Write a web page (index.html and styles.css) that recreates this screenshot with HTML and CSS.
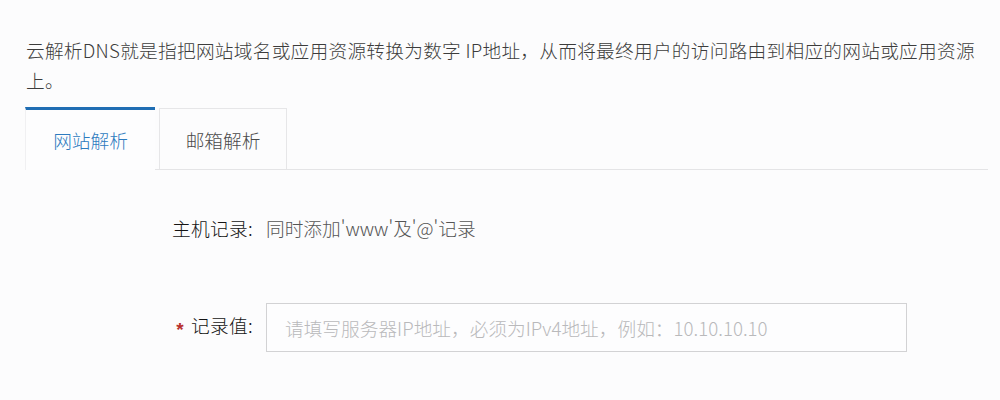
FILE: index.html
```html
<!DOCTYPE html>
<html lang="zh-CN">
<head>
<meta charset="utf-8">
<title>云解析DNS</title>
<link rel="stylesheet" href="styles.css">
</head>
<body>
<div class="page">
  <p class="intro">云解析DNS就是指把网站域名或应用资源转换为数字 IP地址，从而将最终用户的访问路由到相应的网站或应用资源上。</p>
  <div class="tabs">
    <div class="tab active">网站解析</div>
    <div class="tab">邮箱解析</div>
  </div>
  <div class="form">
    <div class="label">主机记录:</div>
    <div class="value">同时添加'www'及'@'记录</div>
    <div class="label label-input"><span class="star">*</span>记录值:</div>
    <div class="field"><input class="input" type="text" placeholder="请填写服务器IP地址，必须为IPv4地址，例如：10.10.10.10"></div>
  </div>
</div>
</body>
</html>
```

FILE: styles.css
```css
html, body {
  margin: 0;
  padding: 0;
  background: #fcfcfd;
}
body {
  font-family: "Noto Sans CJK SC", "Noto Sans", sans-serif;
  font-size: 18.7px;
  color: #333;
}
.page {
  padding: 35px 12px 0 26px;
  width: 962px;
}
.intro {
  margin: 0;
  line-height: 30px;
  color: #3c3c3c;
  font-weight: 300;
  letter-spacing: 0.25px;
}
.tabs {
  display: flex;
  gap: 4px;
  margin: 12px 0 0 -1px;
  border-bottom: 1px solid #e4e4e6;
  height: 62px;
}
.tab {
  width: 128px;
  height: 61px;
  box-sizing: border-box;
  border: 1px solid #e6e6e8;
  border-bottom: none;
  margin-top: 1px;
  display: flex;
  align-items: center;
  justify-content: center;
  color: #4a4a4a;
  font-weight: 300;
  background: #fcfcfd;
}
.tab.active {
  width: 130px;
  height: 63px;
  margin-top: 0;
  border: none;
  border-left: 1px solid #f0f0f2;
  border-top: 3px solid #1f6db3;
  color: #2d7bbf;
  background: #fdfdfe;
  padding-bottom: 2px;
}
.form {
  display: grid;
  grid-template-columns: 232px 641px;
  column-gap: 8px;
  row-gap: 60px;
  margin-top: 43px;
  align-items: center;
}
.label {
  text-align: right;
  line-height: 30px;
  color: #141414;
  font-weight: 300;
  letter-spacing: 0.3px;
  padding-right: 5px;
}
.value {
  line-height: 30px;
  color: #555;
  font-weight: 300;
}
.star {
  color: #b8312f;
  font-family: "Liberation Sans", sans-serif;
  font-size: 19px;
  font-weight: 700;
  margin-right: 7px;
  vertical-align: -3px;
}
.input {
  display: block;
  width: 641px;
  height: 49px;
  box-sizing: border-box;
  border: 1px solid #d2d2d4;
  background: #fdfdfe;
  padding: 0 18px;
  font-family: inherit;
  font-size: 18.7px;
  font-weight: 300;
  outline: none;
}
.input::placeholder {
  color: #b9b9bb;
}
```
